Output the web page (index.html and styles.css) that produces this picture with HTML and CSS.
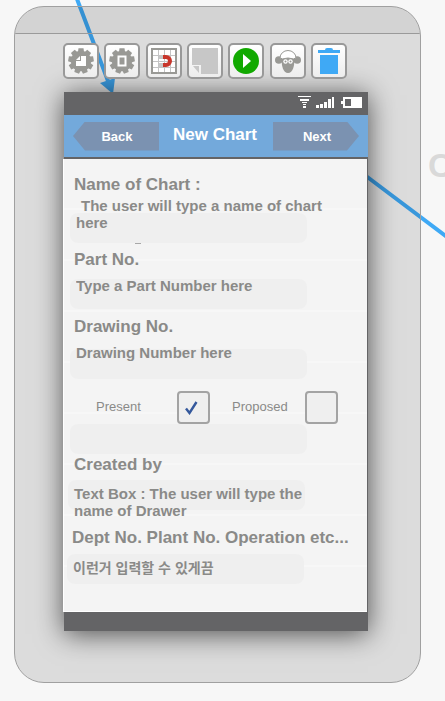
FILE: index.html
```
<!DOCTYPE html>
<html lang="en">
<head>
<meta charset="utf-8">
<meta name="viewport" content="width=device-width, initial-scale=1">
<title>New Chart</title>
<link rel="stylesheet" href="styles.css">
</head>
<body>
<div class="canvas">
  <svg class="links" width="445" height="701" viewBox="0 0 445 701" aria-hidden="true">
    <path d="M77 -1L108 81M366 176L447 237" fill="none" stroke="#3fa9f5" stroke-width="4"/>
    <path d="M100 83L115 78L113 94Z" fill="#3fa9f5"/>
  </svg>
  <span class="next-title">C</span>

  <main class="device">
    <div class="device-top"></div>
    <div class="toolbar">
      <button class="tool" type="button" aria-label="Page settings">
        <svg width="26" height="26" viewBox="0 0 26 26"><g fill="#999995"><circle cx="13" cy="13" r="10.2"/><g id="teeth"><path id="tooth" d="M10 4L10.500 .3h5L16 4z"/><use href="#tooth" transform="rotate(40 13 13)"/><use href="#tooth" transform="rotate(80 13 13)"/><use href="#tooth" transform="rotate(120 13 13)"/><use href="#tooth" transform="rotate(160 13 13)"/><use href="#tooth" transform="rotate(200 13 13)"/><use href="#tooth" transform="rotate(240 13 13)"/><use href="#tooth" transform="rotate(280 13 13)"/><use href="#tooth" transform="rotate(320 13 13)"/></g></g><path d="M13 8h5v10H8v-5h5zM8 12l4-4v4z" fill="#fff"/></svg>
      </button>
      <button class="tool" type="button" aria-label="Device settings">
        <svg width="26" height="26" viewBox="0 0 26 26"><g fill="#999995"><circle cx="13" cy="13" r="10.2"/><use href="#teeth"/></g><path d="M9.500 8.500h7v9h-7z" fill="#999995" stroke="#fff" stroke-width="2"/></svg>
      </button>
      <button class="tool" type="button" aria-label="Snap to grid">
        <svg width="26" height="26" viewBox="0 0 26 26"><path d="M1 1h24v24H1z" fill="#fff" stroke="#999995" stroke-width="2"/><path d="M7.500 2v22M13.500 2v22M19.500 2v22M2 7.500h22M2 13.500h22M2 19.500h22" stroke="#c4c4c4"/><path d="M8 9h4M8 17h4" stroke="#c7c7c7" stroke-width="4"/><path d="M12 9h3a4 4 0 0 1 0 8h-3" fill="none" stroke="#c8362b" stroke-width="4"/></svg>
      </button>
      <button class="tool" type="button" aria-label="Note">
        <svg width="26" height="26" viewBox="0 0 26 26"><path d="M0 0h26v26H9V17H0z" fill="#c7c7c7"/><path d="M1 18h6v7z" fill="#c7c7c7"/></svg>
      </button>
      <button class="tool" type="button" aria-label="Play">
        <svg width="26" height="26" viewBox="0 0 26 26"><circle cx="13" cy="13" r="13" fill="#11a900"/><path d="M10 6v14l8-7z" fill="#fff"/></svg>
      </button>
      <button class="tool" type="button" aria-label="User">
        <svg width="26" height="26" viewBox="0 0 26 26"><circle cx="3.800" cy="12" r="3.800" fill="#999995"/><circle cx="22.200" cy="12" r="3.800" fill="#999995"/><path d="M6.500 10h13c0 8-1.500 15-6.500 15S6.500 18 6.500 10z" fill="#999995"/><path d="M5 10a8 7.500 0 0 1 16 0q-2.500 1.500-5 .5q-3-1-6 0q-2.500 1-5-.5z" fill="#fff" stroke="#999995"/><circle cx="10.500" cy="13.500" r="2.200" fill="#fff"/><circle cx="15.500" cy="13.500" r="2.200" fill="#fff"/><circle cx="10.500" cy="13.500" r="1" fill="#999995"/><circle cx="15.500" cy="13.500" r="1" fill="#999995"/></svg>
      </button>
      <button class="tool" type="button" aria-label="Delete">
        <svg width="26" height="26" viewBox="0 0 26 26"><path d="M2 2h7q0-2 2-2h4q2 0 2 2h7v3H2zM4 7h18v19H4z" fill="#3fa9f5"/></svg>
      </button>
    </div>

    <section class="phone">
      <div class="status">
        <svg width="64" height="12" viewBox="0 0 64 12" fill="#fff" aria-hidden="true"><path d="M0 0h13v1H0zM2 3h9v2H2zM4 6h5v1H4zM5 8h3v1H5zM5 10h3v2H5zM18 9h3v3h-3zM22 8h3v4h-3zM26 6h3v6h-3zM30 3h3v9h-3zM34 1h2v11h-2zM43 5h2v3h-2z"/><path fill-rule="evenodd" d="M45 1h19v11H45zM47 3v7h6V3z"/></svg>
      </div>
      <header class="navbar">
        <button class="nav-button back" type="button">Back</button>
        <h1 class="title">New Chart</h1>
        <button class="nav-button forward" type="button">Next</button>
      </header>

      <form class="form">
        <div class="group">
          <label class="label" for="chart">Name of Chart :</label>
          <div class="field tall remnant">
            <textarea class="entry indented" id="chart" rows="2">The user will type a name of chart here</textarea>
          </div>
        </div>
        <div class="group part">
          <label class="label" for="part">Part No.</label>
          <div class="field"><input class="entry" id="part" type="text" value="Type a Part Number here"></div>
        </div>
        <div class="group">
          <label class="label" for="drawing">Drawing No.</label>
          <div class="field low"><input class="entry" id="drawing" type="text" value="Drawing Number here"></div>
        </div>
        <div class="choices">
          <label for="present">Present</label>
          <span class="check"><input id="present" type="checkbox" checked><svg width="13" height="14" viewBox="0 0 13 14" aria-hidden="true"><path d="M1 7.500l3.500 4.500L11.500 1" fill="none" stroke="#34589c" stroke-width="2.400"/></svg></span>
          <label for="proposed">Proposed</label>
          <span class="check"><input id="proposed" type="checkbox"></span>
        </div>
        <div class="blank"></div>
        <div class="group drawer">
          <label class="label" for="creator">Created by</label>
          <div class="field under">
            <textarea class="entry" id="creator" rows="2">Text Box : The user will type the name of Drawer</textarea>
          </div>
        </div>
        <div class="group dept">
          <label class="label" for="dept">Dept No. Plant No. Operation etc...</label>
          <div class="field inside"><input class="entry korean" id="dept" lang="ko" type="text" value="이런거 입력할 수 있게끔"></div>
        </div>
      </form>
      <div class="home-bar"></div>
    </section>
  </main>
</div>
</body>
</html>
```
FILE: styles.css
```
* { box-sizing: border-box; }
body {
  margin: 0;
  background: #f7f7f7;
  font-family: "Liberation Sans", "Noto Sans CJK KR", sans-serif;
}
.canvas {
  position: relative;
  min-height: 100vh;
  padding: 6px 24px 18px 14px;
  overflow: hidden;
}
.links { position: absolute; left: 0; top: 0; }
.next-title {
  position: absolute;
  left: 428px;
  top: 146px;
  font-size: 34px;
  line-height: 38px;
  font-weight: bold;
  color: #d9d9d9;
}
.device {
  position: relative;
  border: 1px solid #a0a0a0;
  border-radius: 30px;
  background: rgba(0, 0, 0, 0.105);
  overflow: hidden;
  padding-bottom: 51px;
}
.device-top {
  height: 27px;
  border-bottom: 1px solid #9a9a9a;
  background: rgba(0, 0, 0, 0.04);
}
.toolbar {
  position: relative;
  z-index: 2;
  display: flex;
  justify-content: space-between;
  margin: 9px 73px 13px 48px;
}
.tool {
  display: grid;
  place-items: center;
  width: 36px;
  height: 36px;
  padding: 0;
  border: 2px solid #999;
  border-radius: 5px;
  background: linear-gradient(#fff, #ededed);
}
.phone {
  position: relative;
  margin: 0 52px 0 49px;
  background: #646466;
  box-shadow: 0 3px 26px rgba(0, 0, 0, 0.65);
}
.status {
  display: flex;
  justify-content: flex-end;
  height: 23px;
  padding: 4px 6px;
}
.navbar {
  display: flex;
  align-items: center;
  justify-content: space-between;
  height: 44px;
  padding: 0 9px;
  border-bottom: 2px solid #646466;
  background: #73a9db;
}
.nav-button {
  width: 86px;
  height: 29px;
  padding: 0 0 0 2px;
  border: 0;
  background: #7b92b1;
  color: #fff;
  font: bold 13px/29px "Liberation Sans", sans-serif;
}
.back { clip-path: polygon(12px 0, 100% 0, 100% 100%, 12px 100%, 0 50%); }
.forward { clip-path: polygon(0 0, 74px 0, 100% 50%, 74px 100%, 0 100%); }
.title {
  margin: 0;
  padding: 0 2px 2px 0;
  color: #fff;
  font-size: 17px;
  line-height: 20px;
}
.form {
  margin: 0 1px 0 -1px;
  padding: 16px 0 27px 6px;
  border-left: 1px solid #fff;
  border-bottom: 1px solid #fff;
  background: #f4f4f4 repeating-linear-gradient(transparent 0 49px, #f7f7f7 49px 51px);
  color: #8a8a88;
}
.group { padding-bottom: 7px; }
.part { padding-bottom: 8px; }
.label {
  display: block;
  padding-left: 4px;
  font-size: 17px;
  font-weight: bold;
  line-height: 20px;
}
.field {
  position: relative;
  display: grid;
  height: 39px;
  padding-top: 7px;
}
.field::before {
  content: "";
  grid-area: 1 / 1;
  align-self: end;
  width: 237px;
  height: 30px;
  border-radius: 8px;
  background: #efefef;
}
.tall { height: 48px; padding-top: 2px; }
.low { height: 42px; }
.under { height: 36px; padding-top: 10px; }
.under::before { align-self: start; margin-top: -5px; }
.inside { height: 36px; padding-top: 6px; }
.inside .entry { margin-top: 3px; }
.remnant::after {
  content: "";
  position: absolute;
  left: 65px;
  bottom: -1px;
  width: 6px;
  height: 1px;
  background: #a8a8a8;
}
.entry {
  position: relative;
  grid-area: 1 / 1;
  align-self: start;
  display: block;
  width: 265px;
  margin: 0;
  padding: 0 0 0 6px;
  border: 0;
  outline: 0;
  background: transparent;
  color: #8a8a88;
  font: bold 15px/17px "Liberation Sans", "Noto Sans CJK KR", sans-serif;
  resize: none;
  overflow: hidden;
}
input.entry { height: 17px; }
.indented { text-indent: 5px; }
.choices {
  display: grid;
  grid-template-columns: 81px 55px 73px 33px;
  align-items: center;
  padding: 5px 0 0 26px;
  font-size: 13px;
  line-height: 16px;
}
.choices label { padding-bottom: 2px; }
.check { display: grid; place-items: center start; }
.check input {
  grid-area: 1 / 1;
  appearance: none;
  width: 33px;
  height: 33px;
  margin: 0;
  border: 2px solid #a3a3a3;
  border-radius: 4px;
  background: #efefef;
}
.check svg { grid-area: 1 / 1; margin-left: 8px; pointer-events: none; }
.blank {
  width: 237px;
  height: 30px;
  margin-bottom: 1px;
  border-radius: 8px;
  background: #efefef;
}
.drawer { margin-left: -2px; padding-bottom: 17px; }
.drawer .label { padding-left: 6px; }
.dept { margin-left: -3px; padding-bottom: 0; }
.dept .label { padding-left: 5px; }
.drawer .entry, .dept .entry { padding-left: 6px; }
input.korean { height: 20px; font-family: "Noto Sans CJK KR", sans-serif; font-size: 14px; line-height: 20px; }
.home-bar { height: 19px; }
```
